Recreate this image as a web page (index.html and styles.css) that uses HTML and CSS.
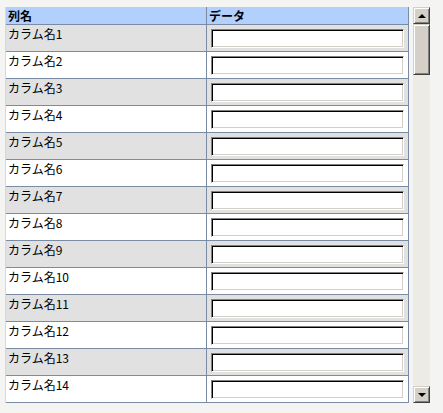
FILE: index.html
```html
<!DOCTYPE html>
<html lang="ja">
<head>
<meta charset="utf-8">
<link rel="stylesheet" href="styles.css">
</head>
<body>
<div class="frame">
  <div class="grid">
    <div class="row head"><div class="c1">列名</div><div class="c2">データ</div></div>
    <div class="row odd"><div class="c1">カラム名1</div><div class="c2"><input class="box" type="text"></div></div>
    <div class="row even"><div class="c1">カラム名2</div><div class="c2"><input class="box" type="text"></div></div>
    <div class="row odd"><div class="c1">カラム名3</div><div class="c2"><input class="box" type="text"></div></div>
    <div class="row even"><div class="c1">カラム名4</div><div class="c2"><input class="box" type="text"></div></div>
    <div class="row odd"><div class="c1">カラム名5</div><div class="c2"><input class="box" type="text"></div></div>
    <div class="row even"><div class="c1">カラム名6</div><div class="c2"><input class="box" type="text"></div></div>
    <div class="row odd"><div class="c1">カラム名7</div><div class="c2"><input class="box" type="text"></div></div>
    <div class="row even"><div class="c1">カラム名8</div><div class="c2"><input class="box" type="text"></div></div>
    <div class="row odd"><div class="c1">カラム名9</div><div class="c2"><input class="box" type="text"></div></div>
    <div class="row even"><div class="c1">カラム名10</div><div class="c2"><input class="box" type="text"></div></div>
    <div class="row odd"><div class="c1">カラム名11</div><div class="c2"><input class="box" type="text"></div></div>
    <div class="row even"><div class="c1">カラム名12</div><div class="c2"><input class="box" type="text"></div></div>
    <div class="row odd"><div class="c1">カラム名13</div><div class="c2"><input class="box" type="text"></div></div>
    <div class="row even"><div class="c1">カラム名14</div><div class="c2"><input class="box" type="text"></div></div>
  </div>
  <div class="scroll">
    <div class="btn"><span class="up"></span></div>
    <div class="track"><div class="thumb"></div></div>
    <div class="btn"><span class="down"></span></div>
  </div>
</div>
</body>
</html>
```
FILE: styles.css
```css
html, body {
  margin: 0;
  padding: 0;
  background: #f4f4f2;
}
body {
  padding: 7px 0 0 5px;
  font-family: "Noto Sans CJK JP", "DejaVu Sans", sans-serif;
  font-size: 12px;
  color: #000;
}
.frame {
  display: flex;
  align-items: flex-start;
  gap: 4px;
}
.grid {
  width: 402px;
  border-left: 1px solid #d8d8d8;
  border-right: 1px solid #7b8ba3;
  display: flex;
  flex-direction: column;
}
.row {
  display: flex;
  height: 26px;
  border-bottom: 1px solid #7b8ba3;
}
.row.head {
  height: 17px;
  background: #b2d0fc;
  font-weight: bold;
}
.row.odd { background: #e1e1e1; }
.row.even { background: #ffffff; }
.c1 {
  width: 201px;
  border-right: 1px solid #7b8ba3;
  padding: 0 0 0 2px;
  box-sizing: border-box;
  line-height: 17px;
  white-space: nowrap;
}
.row.head .c1, .row.head .c2 { line-height: 17px; }
.c2 {
  flex: 1;
  padding: 4px 3px 0 4px;
  box-sizing: border-box;
  line-height: 17px;
}
.row.head .c2 { padding: 0 0 0 2px; }
.box {
  display: block;
  width: 193px;
  height: 19px;
  box-sizing: border-box;
  margin: 0;
  padding: 0;
  background: #fff;
  border: 1px solid;
  border-color: #808080 #ffffff #ffffff #808080;
  box-shadow: inset 1px 1px 0 #000, inset -1px -1px 0 #d4d0c8;
  outline: none;
}
.scroll {
  width: 17px;
  height: 396px;
  display: flex;
  flex-direction: column;
  background: #ecebe6;
}
.btn {
  width: 17px;
  height: 17px;
  box-sizing: border-box;
  background: #d4d0c8;
  border: 1px solid;
  border-color: #d4d0c8 #404040 #404040 #d4d0c8;
  box-shadow: inset 1px 1px 0 #fff, inset -1px -1px 0 #808080;
  display: flex;
  align-items: center;
  justify-content: center;
}
.up, .down {
  width: 0;
  height: 0;
  border-left: 4px solid transparent;
  border-right: 4px solid transparent;
}
.up { border-bottom: 4px solid #000; }
.down { border-top: 4px solid #000; }
.track {
  flex: 1;
}
.thumb {
  height: 51px;
  box-sizing: border-box;
  background: #d4d0c8;
  border: 1px solid;
  border-color: #d4d0c8 #404040 #404040 #d4d0c8;
  box-shadow: inset 1px 1px 0 #fff, inset -1px -1px 0 #808080;
}
```
